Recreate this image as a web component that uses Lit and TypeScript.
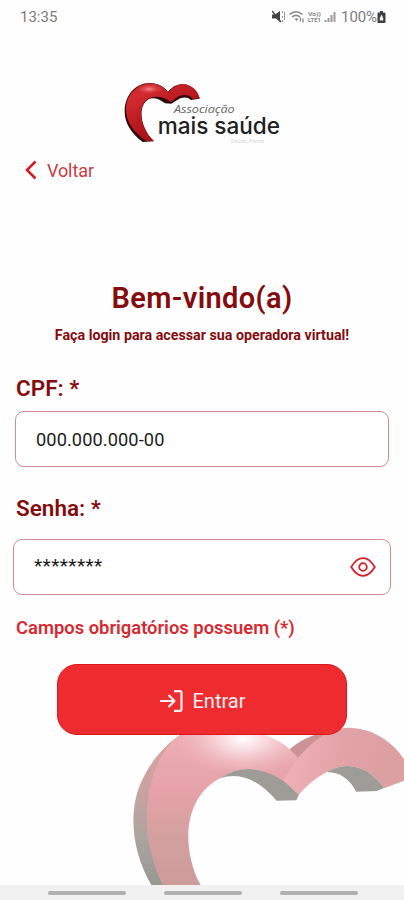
import { LitElement, html, svg, css } from "lit";
import { customElement } from "lit/decorators.js";

@customElement("status-bar")
class StatusBar extends LitElement {
  static styles = css`
    :host { display: flex; height: 34px; padding: 0 18px 0 20px; box-sizing: border-box;
      align-items: center; justify-content: space-between; color: #7c7c7c; font-size: 15px; }
    .right { display: flex; align-items: center; }
    .pct { margin-left: 3px; letter-spacing: -0.1px; }
    svg { display: block; margin-left: -2px; }
    .battery { margin-left: 0; }
    .volte { font: 700 5.500px "Roboto", sans-serif; }
  `;
  render() {
    return html`
      <span>13:35</span>
      <div class="right">
        <svg width="66" height="16" viewBox="0 0 66 16" fill="none" stroke="#888">
          <path d="M0 5.500h3L8 2v11L4 9.500H0z" fill="#444" stroke="none" />
          <path d="M0 2l9 11" stroke="#444" stroke-width="1.300" />
          <path d="M10.500 2v2M10.500 7v2M10.500 11v2M12.500 3v8" stroke="#999" />
          <path d="M17.500 5.500Q24 0 30.500 5.500M20 8Q24 4.800 28 8" stroke="#888" stroke-width="1.600" />
          <path d="M22.500 9.500l2 2.500 2-2.500z" fill="#777" stroke="none" />
          <path d="M28.500 8.500v4M31 9.500v4" stroke-width="1.300" />
          <g fill="#888" stroke="none" class="volte">
            <text x="36" y="6.500" textLength="13" lengthAdjust="spacingAndGlyphs">Vo))</text>
            <text x="36" y="13" textLength="13" lengthAdjust="spacingAndGlyphs">LTE1</text>
          </g>
          <path d="M53.500 13v-2M56.500 13V9M59.500 13V6M62.500 13V3" stroke="#999" stroke-width="2" />
        </svg>
        <span class="pct">100%</span>
        <svg class="battery" width="9" height="14" viewBox="0 0 9 14">
          <path d="M3 1h3v1.500h1.500q1 0 1 1V12q0 1-1 1h-6q-1 0-1-1V3.500q0-1 1-1H3z" fill="#404040" />
          <path d="M4.500 4.500L2.800 8v2.500h3.400V8z" fill="#eee" />
        </svg>
      </div>
    `;
  }
}

@customElement("brand-logo")
class BrandLogo extends LitElement {
  static styles = css`
    :host { display: block; width: 190px; height: 85px; }
    svg { display: block; }
    .small { font: italic 400 33px "Open Sans", sans-serif; }
    .name { font: 500 67px "Inter", sans-serif; }
    .tag { font: italic 14px "Open Sans", sans-serif; }
  `;
  render() {
    return html`
      <svg width="190" height="85" viewBox="0 0 570 255">
        <defs>
          <linearGradient id="body" x1="0" y1="0" x2="0.7" y2="1">
            <stop offset="0" stop-color="#b8161c" />
            <stop offset="0.2" stop-color="#d22c32" />
            <stop offset="0.5" stop-color="#bc1b20" />
            <stop offset="1" stop-color="#97090e" />
          </linearGradient>
          <radialGradient id="shine">
            <stop offset="0" stop-color="#f08c8c" />
            <stop offset="1" stop-color="#e03238" stop-opacity="0" />
          </radialGradient>
        </defs>
        <path d="M98 216C64 190 43 158 44 122C45 76 76 39 119 39C145 39 162 51 174 65C190 47 204 42 219 43C244 44 262 61 269 86L242 90C232 80 217 81 203 89L184 101L165 100C148 86 128 81 116 88C92 102 90 133 101 167C109 187 119 203 132 214Z" fill="#30090b" />
        <path d="M108 213C73 187 49 158 48 120C47 78 78 41 120 40C145 41 162 52 175 68C189 50 202 43 219 43C245 44 262 61 269 84L250 88C239 73 216 71 201 82L183 96C160 79 134 75 114 87C89 103 89 138 101 169C109 187 119 202 132 213Z" fill="url(#body)" />
        <ellipse cx="118" cy="57" rx="40" ry="15" fill="url(#shine)" />
        <text class="small" x="192" y="130" textLength="182" lengthAdjust="spacingAndGlyphs" fill="#666">Associação</text>
        <text class="name" x="143" y="192" textLength="367" lengthAdjust="spacingAndGlyphs" fill="#202020">mais saúde</text>
        <text class="tag" x="361" y="219" textLength="101" lengthAdjust="spacingAndGlyphs" fill="#d4d4d4">Saúde Plena</text>
      </svg>
    `;
  }
}

@customElement("heart-backdrop")
class HeartBackdrop extends LitElement {
  static styles = css`
    :host { display: block; width: 294px; height: 170px; }
    svg { display: block; }
  `;
  render() {
    return html`
      <svg width="294" height="170" viewBox="0 0 882 510">
        <defs>
          <linearGradient id="face" x1="0" y1="0" x2="0" y2="1">
            <stop offset="0" stop-color="#edb0b6" />
            <stop offset="0.4" stop-color="#e6a2a8" />
            <stop offset="0.7" stop-color="#d3a09f" />
            <stop offset="1" stop-color="#cc9c9a" />
          </linearGradient>
          <linearGradient id="side" x1="0" y1="0" x2="0" y2="1">
            <stop offset="0" stop-color="#e0a0a4" />
            <stop offset="0.45" stop-color="#c3a3a0" />
            <stop offset="0.7" stop-color="#aba49f" />
            <stop offset="1" stop-color="#989893" />
          </linearGradient>
          <linearGradient id="right" gradientUnits="userSpaceOnUse" x1="540" y1="150" x2="800" y2="200">
            <stop offset="0" stop-color="#edb0b6" />
            <stop offset="0.5" stop-color="#e3a4a8" />
            <stop offset="1" stop-color="#dc9fa2" />
          </linearGradient>
          <radialGradient id="glow">
            <stop offset="0" stop-color="#fff" />
            <stop offset="0.35" stop-color="#fbe3e6" stop-opacity="0.8" />
            <stop offset="1" stop-color="#f3bdc3" stop-opacity="0" />
          </radialGradient>
          <clipPath id="left"><path d="M158 510C112 410 98 320 120 215C135 150 170 80 225 50Q380 20 475 65Q530 85 564 130L566 240C510 185 450 162 415 162C380 163 360 172 340 185C270 215 236 285 235 360C234 405 246 465 272 510Z" /></clipPath>
        </defs>
        <path d="M124 510C65 410 55 290 92 205C121 137 173 79 225 52L275 60C180 120 125 190 116 280C104 350 127 440 160 510Z" fill="url(#side)" />
        <path d="M158 510C112 410 98 320 120 215C135 150 170 80 225 50Q380 20 475 65Q530 85 564 130L600 180L566 240C510 185 450 162 415 162C380 163 360 172 340 185C270 215 236 285 235 360C234 405 246 465 272 510Z" fill="url(#face)" />
        <g clip-path="url(#left)"><ellipse cx="400" cy="72" rx="200" ry="110" fill="url(#glow)" /></g>
        <path d="M332 189Q370 162 415 162C470 163 520 190 567 239L559 256L500 257C460 211 415 183 372 183Q350 183 332 189Z" fill="#9d9c97" />
        <path d="M539 103C570 75 610 58 655 48L564 130Z" fill="#cb9394" />
        <path d="M562 130C605 84 650 39 715 38C785 38 850 80 882 133V197L822 220C790 175 755 154 712 153Q680 153 650 171C615 190 590 212 566 240L520 196Z" fill="url(#right)" />
        <path d="M650 171Q680 153 712 153C755 154 790 175 822 219L801 228L739 230C717 190 690 172 650 171Z" fill="#9d9c97" />
      </svg>
    `;
  }
}

@customElement("app-root")
class AppRoot extends LitElement {
  static styles = css`
    :host { display: block; position: relative; width: 404px; height: 900px; overflow: hidden;
      background: #fefefe; font-family: "Roboto", sans-serif; }
    .page { display: flex; flex-direction: column; height: 900px; position: relative; }
    .backdrop { position: absolute; right: 0; bottom: 15px; }
    .logo { margin: 36px 0 0 110px; }
    .back { display: flex; align-items: center; height: 30px; margin-left: 25px; gap: 10px;
      color: #c83c46; font-size: 18px; letter-spacing: -0.1px; }
    h1 { margin: 93px 0 0; height: 40px; line-height: 40px; text-align: center; color: #850b0e;
      font-size: 29px; font-weight: 600; letter-spacing: 0.350px; }
    .sub { margin: 7px 0 0; height: 20px; line-height: 20px; text-align: center; color: #850b0e;
      font-size: 14.250px; font-weight: 700; white-space: nowrap; }
    .label { height: 30px; line-height: 30px; margin-left: 16px; color: #850b0e; font-size: 22.500px;
      font-weight: 600; }
    .cpf-label { margin-top: 28px; }
    .pw-label { margin-top: 26px; }
    .field { display: flex; box-sizing: border-box; height: 56px; border: 1px solid #cf8c90;
      border-radius: 9px; background: #fff; align-items: center; color: #1c1c1c; font-size: 18.200px; }
    .cpf { margin: 8px 15px 0; padding-left: 20px; letter-spacing: 0.100px; }
    .pw { margin: 16px 13px 0; padding: 0 14px 0 20px; justify-content: space-between; }
    .stars { font-size: 19px; letter-spacing: 0.4px; padding-bottom: 3px; }
    .note { height: 24px; line-height: 24px; margin: 21px 0 0 16px; color: #d62a32;
      font-size: 18.400px; font-weight: 600; }
    .enter { display: flex; align-items: center; justify-content: center; gap: 10px;
      box-sizing: border-box; width: 290px; height: 71px; margin: 24px 0 0 57px; padding: 2px 0 0 1px;
      border: 1px solid #dc171c; border-radius: 20px; background: #ee2b2f; color: #fff0f0;
      font: 400 20px "Roboto", sans-serif; }
    .nav { display: flex; gap: 38px; height: 15px; margin-top: auto; padding: 6px 0 0 48px;
      box-sizing: border-box; background: #f1f1f1; }
    .nav i { width: 78px; height: 4px; border-radius: 2px; background: #b0b0b0; }
    svg { display: block; }
  `;

  private eye = svg`
    <path d="M1.200 10Q6.500 1.200 13 1.200T24.800 10Q19.500 18.800 13 18.800T1.200 10Z" />
    <circle cx="13" cy="10" r="3.800" />
  `;

  render() {
    return html`
      <heart-backdrop class="backdrop"></heart-backdrop>
      <div class="page">
        <status-bar></status-bar>
        <brand-logo class="logo"></brand-logo>
        <div class="back">
          <svg width="12" height="20" viewBox="0 0 12 20" fill="none" stroke="#cf1e28" stroke-width="2.600">
            <path d="M10.500 1.500L2 10l8.500 8.500" />
          </svg>
          <span>Voltar</span>
        </div>
        <h1>Bem-vindo(a)</h1>
        <p class="sub">Faça login para acessar sua operadora virtual!</p>
        <div class="label cpf-label">CPF: *</div>
        <div class="field cpf">000.000.000-00</div>
        <div class="label pw-label">Senha: *</div>
        <div class="field pw">
          <span class="stars">********</span>
          <svg width="26" height="20" viewBox="0 0 26 20" fill="none" stroke="#d3202b" stroke-width="1.800">${this.eye}</svg>
        </div>
        <div class="note">Campos obrigatórios possuem (*)</div>
        <button class="enter">
          <svg width="23" height="22" viewBox="0 0 23 22" fill="none" stroke="#fff0f0" stroke-width="2.200" stroke-linejoin="round">
            <path d="M0 11h14M8.500 5l6 6-6 6M14 1.200h6q1.500 0 1.500 1.500v16.600q0 1.500-1.500 1.500h-6" />
          </svg>
          <span>Entrar</span>
        </button>
        <div class="nav"><i></i><i></i><i></i></div>
      </div>
    `;
  }
}
